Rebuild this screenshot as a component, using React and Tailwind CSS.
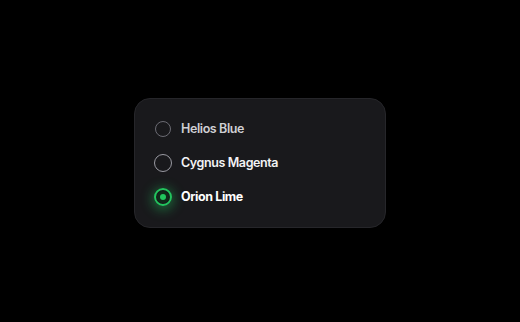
import React, { useState } from "react";

const options = [
  { id: "helios", label: "Helios Blue" },
  { id: "cygnus", label: "Cygnus Magenta" },
  { id: "orion", label: "Orion Lime" },
];

const App = () => {
  const [selected, setSelected] = useState("orion");

  return (
    <div
      className="w-[520px] h-[322px] bg-black flex items-center justify-center"
      style={{ fontFamily: "Inter, 'Liberation Sans', sans-serif" }}
    >
      <div className="w-[252px] h-[130px] mt-[4px] rounded-[16px] bg-[#19191c] border border-[#26262a] pl-[19px] pt-[21px] flex flex-col gap-[16px]">
        {options.map((opt) => {
          const isOn = selected === opt.id;
          return (
            <label
              key={opt.id}
              onClick={() => setSelected(opt.id)}
              className="flex items-center gap-[9px] h-[18px] cursor-pointer"
            >
              {isOn ? (
                <span className="w-[18px] h-[18px] rounded-full border-[2px] border-[#22c55e] flex items-center justify-center shadow-[0_2px_12px_2px_rgba(34,197,94,0.45)]">
                  <span className="w-[12px] h-[12px] rounded-full bg-[#0f2a1a] flex items-center justify-center">
                    <span className="w-[6px] h-[6px] rounded-full bg-[#22c55e]" />
                  </span>
                </span>
              ) : (
                <span
                  className={
                    opt.id === "helios"
                      ? "w-[16px] h-[16px] mx-[1px] rounded-full border-[1.5px] border-[#6b6b73]"
                      : "w-[18px] h-[18px] rounded-full border-[1.5px] border-[#9a9aa2]"
                  }
                />
              )}
              <span
                className={
                  isOn
                    ? "text-[12.5px] font-bold tracking-[-0.4px] text-white"
                    : opt.id === "helios"
                    ? "text-[12.5px] font-semibold tracking-[-0.4px] text-[#cfcfd3]"
                    : "text-[12.5px] font-semibold tracking-[-0.4px] text-[#f2f2f4]"
                }
              >
                {opt.label}
              </span>
            </label>
          );
        })}
      </div>
    </div>
  );
};

export default App;
